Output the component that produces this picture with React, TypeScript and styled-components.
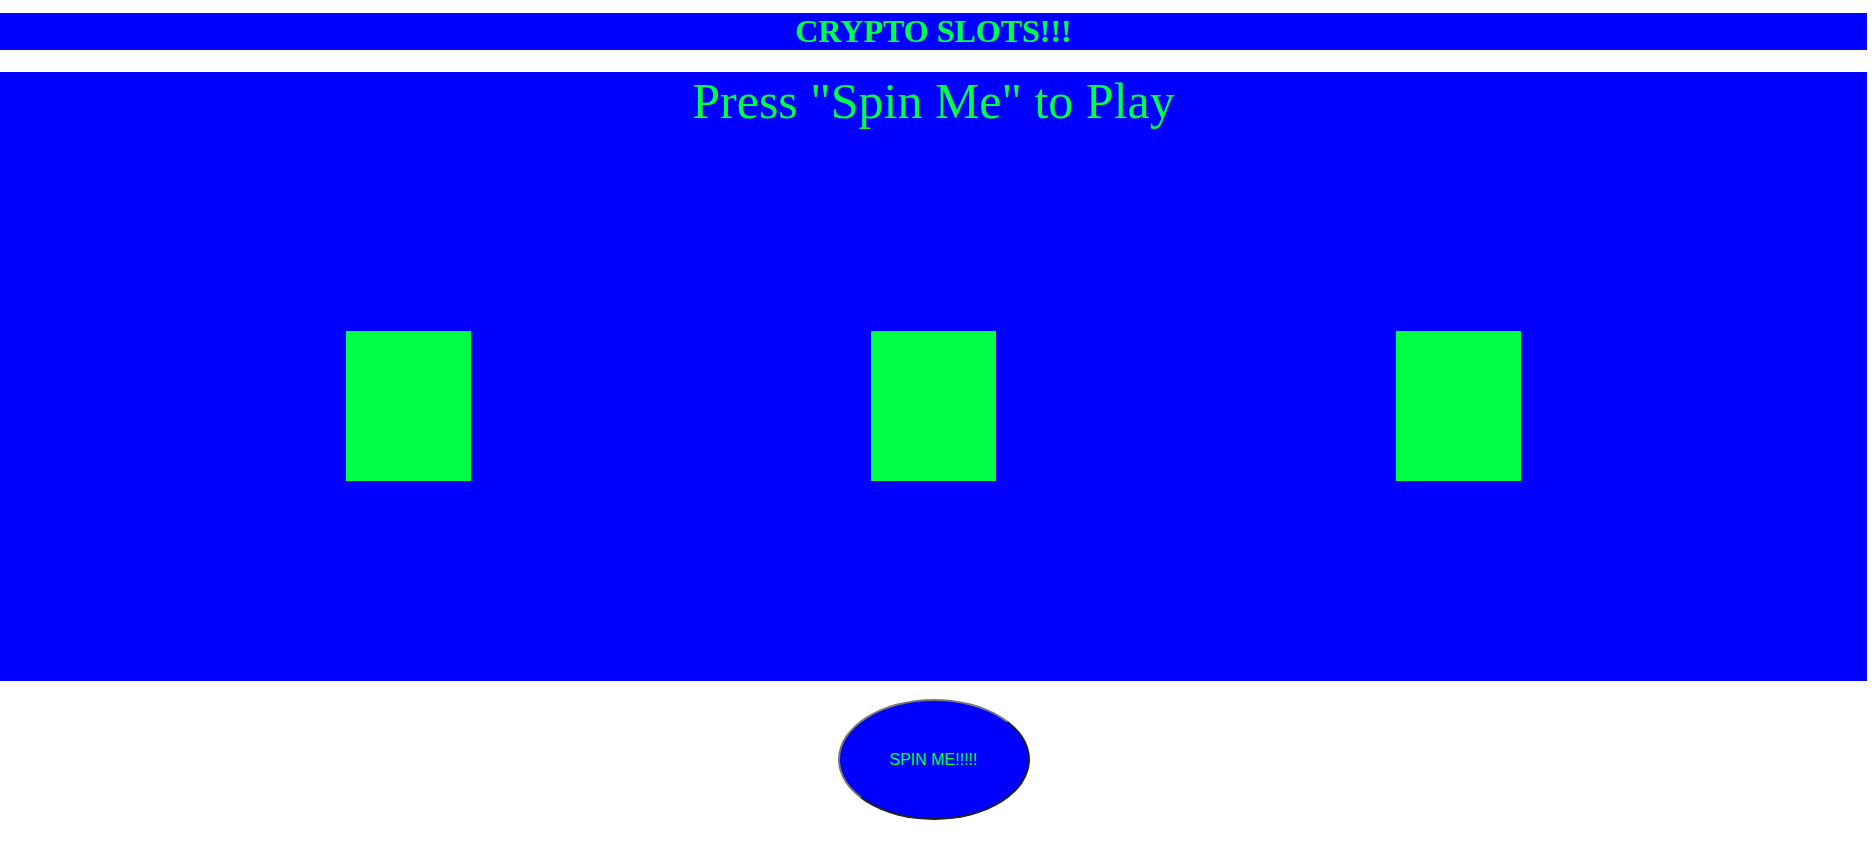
import React from "react";
import styled, { createGlobalStyle } from "styled-components";

const GREEN = "#00ff44";
const BLUE = "#0000ff";

const GlobalStyle = createGlobalStyle`
  html, body {
    margin: 0;
    padding: 0;
    background: #ffffff;
  }
  body {
    font-family: "Liberation Serif", "Times New Roman", serif;
  }
`;

const Page = styled.div`
  width: 1867px;
  display: flex;
  flex-direction: column;
  align-items: center;
  padding-top: 13px;
`;

const Header = styled.h1`
  align-self: stretch;
  margin: 0;
  height: 37px;
  line-height: 37px;
  background: ${BLUE};
  color: ${GREEN};
  font-family: "Liberation Serif", "Times New Roman", serif;
  font-weight: bold;
  font-size: 32px;
  text-align: center;
`;

const Machine = styled.section`
  align-self: stretch;
  margin-top: 22px;
  height: 609px;
  background: ${BLUE};
  display: flex;
  flex-direction: column;
`;

const Prompt = styled.h2`
  margin: 0;
  color: ${GREEN};
  font-family: "Liberation Serif", "Times New Roman", serif;
  font-weight: normal;
  font-size: 50px;
  line-height: 59px;
  text-align: center;
`;

const Reels = styled.div`
  flex: 1;
  display: flex;
  justify-content: center;
  align-items: center;
  gap: 400px;
`;

const Reel = styled.div`
  width: 125px;
  height: 150px;
  background: ${GREEN};
`;

const SpinButton = styled.button`
  margin-top: 18px;
  width: 192px;
  height: 121px;
  border-radius: 50%;
  border: 2px outset #767676;
  background: ${BLUE};
  color: ${GREEN};
  font-family: "Liberation Sans", Arial, sans-serif;
  font-size: 16px;
  cursor: pointer;
  padding: 0;
`;

export default function App() {
  return (
    <>
      <GlobalStyle />
      <Page>
        <Header>CRYPTO SLOTS!!!</Header>
        <Machine>
          <Prompt>Press "Spin Me" to Play</Prompt>
          <Reels>
            <Reel />
            <Reel />
            <Reel />
          </Reels>
        </Machine>
        <SpinButton>SPIN ME!!!!!</SpinButton>
      </Page>
    </>
  );
}
